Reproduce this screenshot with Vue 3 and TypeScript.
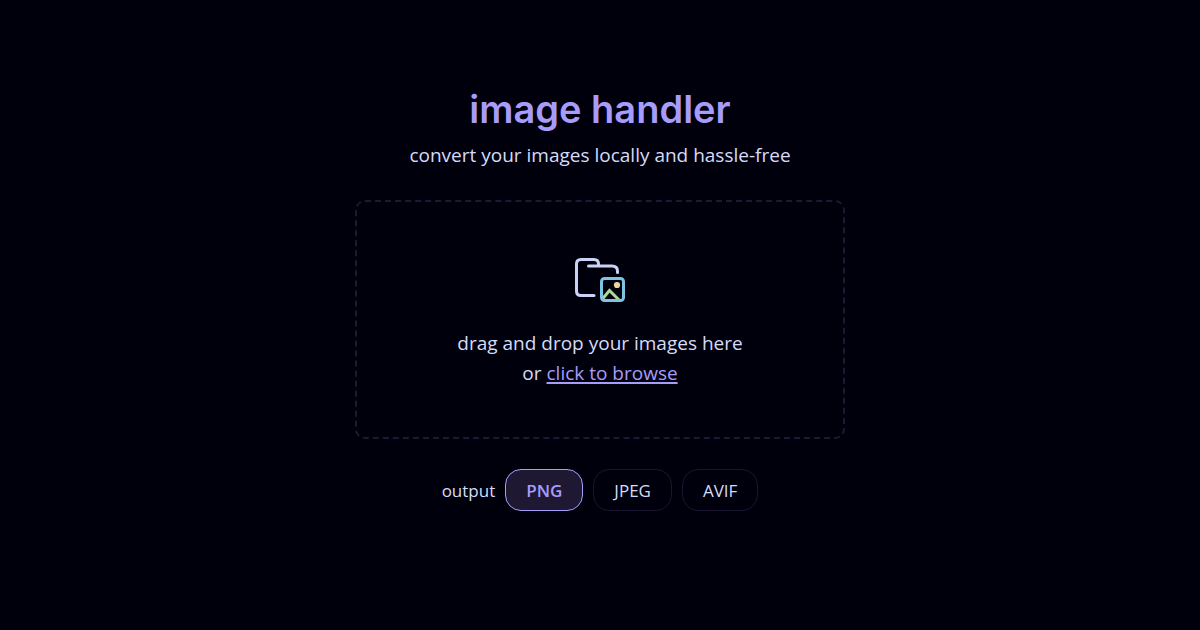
<script setup lang="ts">
import { ref } from 'vue'

type Format = 'PNG' | 'JPEG' | 'AVIF'

const formats: Format[] = ['PNG', 'JPEG', 'AVIF']
const output = ref<Format>('PNG')
const picker = ref<HTMLInputElement | null>(null)

function browse(): void {
  picker.value?.click()
}
</script>

<template>
  <main class="page">
    <header class="intro">
      <h1 class="title">image handler</h1>
      <p class="subtitle">convert your images locally and hassle-free</p>
    </header>

    <section class="dropzone" @dragover.prevent @drop.prevent>
      <svg class="icon" viewBox="5 0 60 60" fill="none" stroke-width="3" stroke-linecap="round" stroke-linejoin="round" aria-hidden="true">
        <path stroke="#cad3f5" d="M29 45.500H16q-4.500 0-4.500-4.500V14q0-4.500 4.500-4.500H29q4.500 0 4.500 4.500V15.500M23.500 16H47q5.500 0 5.500 5V22.500" />
        <path stroke="#a6da95" stroke-linecap="butt" stroke-linejoin="miter" d="M37 49.500 44.500 40.500 54.500 50.500" />
        <circle cx="52" cy="35" r="3.100" fill="#eed49f" />
        <rect stroke="#7dc4e4" x="36.500" y="28.500" width="22" height="22" rx="3" />
      </svg>
      <p class="prompt">drag and drop your images here<br />or <a class="browse" href="#" @click.prevent="browse">click to browse</a></p>
      <input ref="picker" type="file" accept="image/*" multiple hidden aria-label="images" />
    </section>

    <div class="output" role="group" aria-labelledby="output-label">
      <span id="output-label" class="label">output</span>
      <button
        v-for="format in formats"
        :key="format"
        type="button"
        class="format"
        :class="{ active: format === output }"
        :aria-pressed="format === output"
        @click="output = format"
      >{{ format }}</button>
    </div>
  </main>
</template>

<style>
body {
  background: #00000d;
}
</style>

<style scoped>
.page {
  box-sizing: border-box;
  min-height: 100vh;
  padding: 0 20px 36px;
  display: flex;
  flex-direction: column;
  align-items: center;
  justify-content: center;
  gap: 30px;
  background: #00000d;
  color: #d6dcf8;
  font-family: 'Open Sans', 'Noto Sans', sans-serif;
  font-size: 19px;
  line-height: 30px;
}

.intro {
  text-align: center;
}

.title {
  margin: 0 0 6px;
  color: #a89cfa;
  font-family: Inter, sans-serif;
  font-size: 38px;
  font-weight: 600;
  line-height: 50px;
}

.subtitle,
.prompt {
  margin: 0;
}

.dropzone {
  box-sizing: border-box;
  width: 100%;
  max-width: 490px;
  padding: 48px 20px 49px;
  display: flex;
  flex-direction: column;
  align-items: center;
  gap: 18px;
  border: 2px dashed #1e1833;
  border-radius: 10px;
  text-align: center;
}

.icon {
  width: 60px;
  height: 60px;
}

.browse {
  color: #a89cfa;
  text-decoration-thickness: 2px;
  text-underline-offset: 2px;
}

.output {
  display: flex;
  flex-wrap: wrap;
  align-items: center;
  gap: 10px;
  font-size: 17px;
}

.label {
  padding-top: 2px;
}

.format {
  padding: 6px 20px 4px;
  border: 1px solid #1a1530;
  border-radius: 16px;
  background: transparent;
  color: inherit;
  font: inherit;
  cursor: pointer;
}

.format.active {
  border-color: #a89cfa;
  background: #1e1833;
  color: #a89cfa;
  font-weight: 600;
}
</style>
